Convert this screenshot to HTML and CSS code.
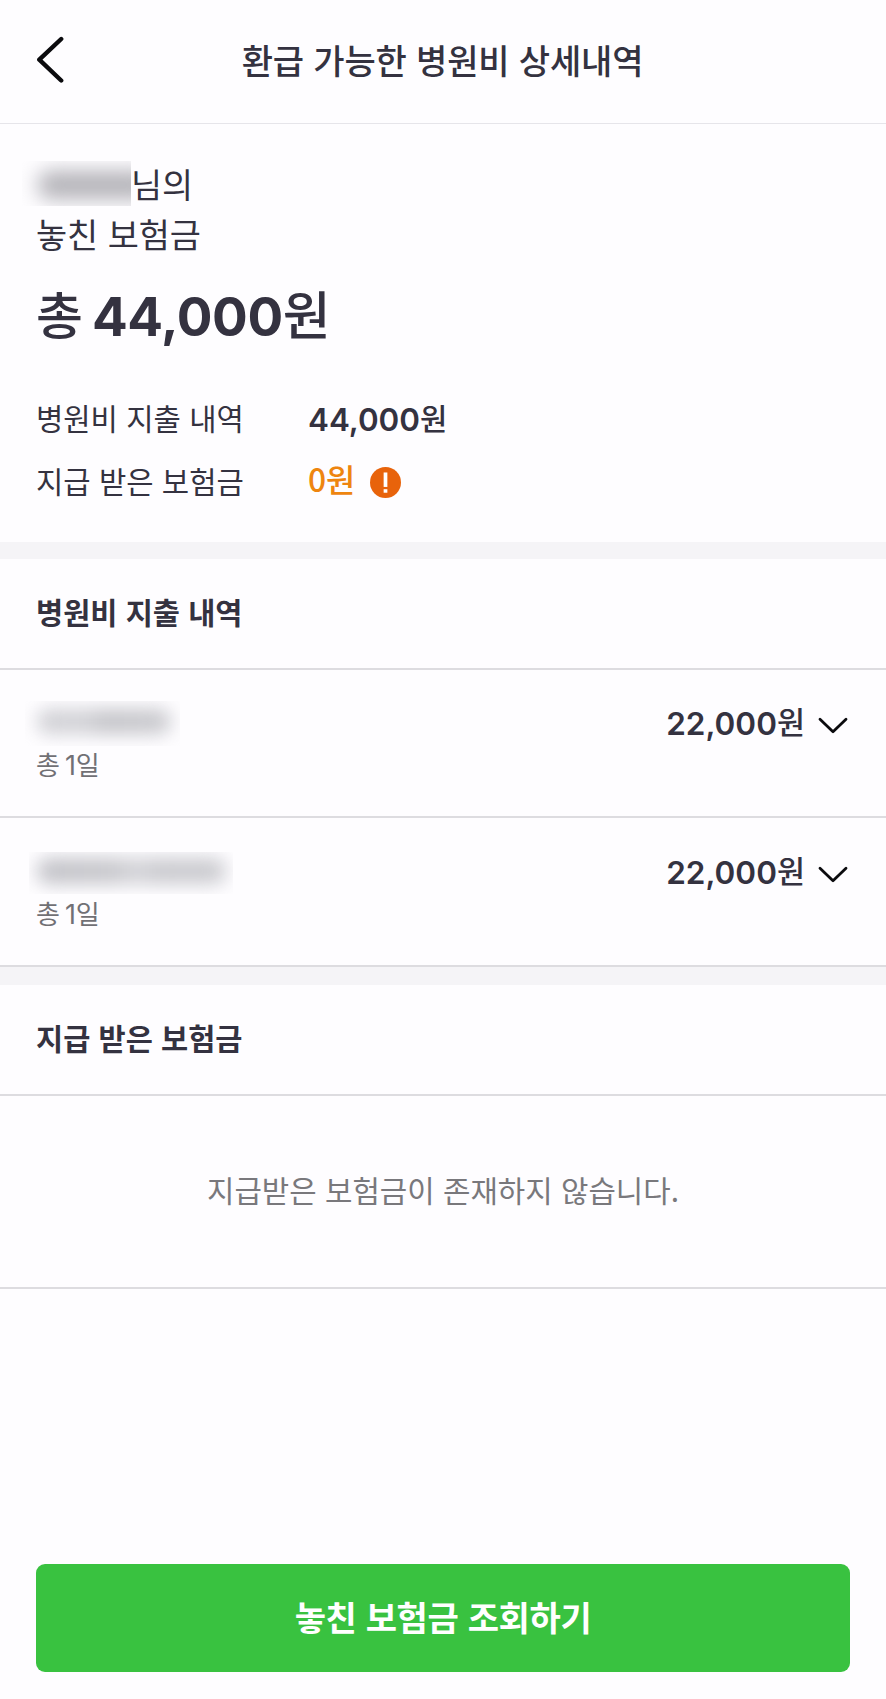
FILE: index.html
```html
<!DOCTYPE html>
<html lang="ko">
<head>
<meta charset="utf-8">
<title>환급 가능한 병원비 상세내역</title>
<link rel="stylesheet" href="styles.css">
</head>
<body>
<div class="app">
  <header class="header">
    <svg class="back" width="28" height="48" viewBox="0 0 28 48"><path d="M25.2 3 3.3 23.7 25.2 44.5" fill="none" stroke="#0b0b0e" stroke-width="4.4" stroke-linecap="round" stroke-linejoin="round"/></svg>
    <h1 class="title">환급 가능한 병원비 상세내역</h1>
  </header>

  <section class="summary">
    <div class="line"><span class="mask mask-user"><i></i></span><span>님의</span></div>
    <div class="line">놓친 보험금</div>
    <div class="total"><span class="total-label">총</span><span class="num">44,000</span><span class="total-unit">원</span></div>
    <div class="row"><span class="label">병원비 지출 내역</span><span class="value"><span class="num">44,000</span>원</span></div>
    <div class="row"><span class="label">지급 받은 보험금</span><span class="value orange">0원</span>
      <svg class="alert" width="31" height="31" viewBox="0 0 30 30"><circle cx="15" cy="15" r="15" fill="#e8630b"/><rect x="13.2" y="5.3" width="3.6" height="14" fill="#fff"/><rect x="13.2" y="21.5" width="3.6" height="3.4" fill="#fff"/></svg>
    </div>
  </section>

  <section class="section spend">
    <h2 class="heading">병원비 지출 내역</h2>
    <div class="item">
      <div class="place"><span class="mask mask-a"><i></i></span><p class="days">총 <span class="num">1</span>일</p></div>
      <div class="price"><span class="num">22,000</span>원</div>
      <svg class="chevron" width="30" height="17" viewBox="0 0 30 17"><path d="M2 2.2 15 14.7 28 2.2" fill="none" stroke="#0b0b0e" stroke-width="2.8" stroke-linecap="round" stroke-linejoin="round"/></svg>
    </div>
    <div class="item">
      <div class="place"><span class="mask mask-b"><i></i></span><p class="days">총 <span class="num">1</span>일</p></div>
      <div class="price"><span class="num">22,000</span>원</div>
      <svg class="chevron" width="30" height="17" viewBox="0 0 30 17"><path d="M2 2.2 15 14.7 28 2.2" fill="none" stroke="#0b0b0e" stroke-width="2.8" stroke-linecap="round" stroke-linejoin="round"/></svg>
    </div>
  </section>

  <section class="section received">
    <h2 class="heading">지급 받은 보험금</h2>
    <p class="empty">지급받은 보험금이 존재하지 않습니다.</p>
  </section>

  <footer class="footer"><button class="cta">놓친 보험금 조회하기</button></footer>
</div>
</body>
</html>
```
FILE: styles.css
```css
* { box-sizing: border-box; margin: 0; padding: 0; }
body {
  background: #fefdff;
  color: #343240;
  font-family: "Noto Sans CJK KR", sans-serif;
}
.app { display: flex; flex-direction: column; height: 1699px; overflow: hidden; }
.num { font-family: Inter, sans-serif; }

.header {
  display: grid;
  grid-template-columns: 28px 1fr 28px;
  height: 124px;
  padding: 0 37px 4px 36px;
  align-items: center;
  border-bottom: 1px solid #e6e5ea;
}
.title { padding-top: 1px; font-size: 34px; font-weight: 500; line-height: 50px; letter-spacing: -0.15px; text-align: center; white-space: nowrap; }

.summary { height: 418px; padding: 35px 37px 0 36px; }
.line { display: flex; height: 50px; font-size: 33.8px; line-height: 50px; }
.total { display: flex; height: 60px; margin: 24px 0 43px; font-size: 51px; font-weight: 500; line-height: 60px; }
.total .num { margin-left: 9px; padding-top: 4px; font-size: 53px; font-weight: 700; letter-spacing: -0.4px; }
.total-unit { font-size: 52px; }
.row { display: flex; height: 63px; font-size: 29.7px; line-height: 63px; }
.label { width: 272px; }
.value { font-weight: 500; }
.value .num { position: relative; top: 1px; font-size: 31.4px; font-weight: 600; }
.orange { color: #ee850f; font-size: 31.8px; line-height: 58px; }
.alert { margin: 18px 0 0 15px; }

.mask { display: block; overflow: hidden; flex: none; }
.mask i { display: block; border-radius: 12px; }
.mask-user { width: 109px; height: 45px; margin: 2px 0 0 -14px; }
.mask-user i { width: 115px; height: 28px; margin: 10px 0 0 16px; background: #b3b2b8; filter: blur(10px); }
.mask-a { width: 155px; height: 45px; margin-left: -11px; }
.mask-a i { width: 134px; height: 25px; margin: 8px 0 0 12px; background: linear-gradient(90deg, #cfcfd4, #d2d2d7 35%, #c4c4c9 50%, #c9c9ce); filter: blur(9px); }
.mask-b { width: 204px; height: 42px; margin: 3px 0 1px -7px; }
.mask-b i { width: 189px; height: 26px; margin: 6px 0 0 8px; background: linear-gradient(90deg, #c2c2c8, #c6c6cb 40%, #d3d3d8 52%, #c9c9ce 65%, #cbcbd0); filter: blur(9px); }

.section { border-top: 17px solid #f5f4f7; }
.heading {
  height: 111px;
  padding: 22px 36px 0;
  border-bottom: 2px solid #dddce0;
  font-size: 29.5px;
  font-weight: 700;
  line-height: 60px;
}
.item { display: flex; height: 148px; padding: 31px 36px 0; border-bottom: 2px solid #dddce0; }
.item + .item { height: 149px; padding-top: 32px; }
.place { flex: 1; }
.days { height: 36px; color: #717075; font-size: 26px; line-height: 36px; letter-spacing: -0.3px; }
.days .num { margin-left: -1.5px; font-size: 27px; }
.item + .item .mask { margin-top: 2px; }
.price { font-size: 30.5px; font-weight: 500; line-height: 41px; }
.price .num { position: relative; top: 1px; font-size: 31.5px; font-weight: 600; }
.chevron { margin: 16px 2px 0 13px; }
.received { border-top-width: 18px; }
.empty { height: 193px; border-bottom: 2px solid #dddce0; color: #79787c; font-size: 29.8px; line-height: 187px; text-align: center; }

.footer { margin-top: auto; padding: 0 36px 27px; }
.cta {
  display: block;
  width: 100%;
  height: 108px;
  padding-bottom: 3px;
  border: 0;
  border-radius: 9px;
  background: #39c240;
  color: #fff;
  font: 700 34px/60px "Noto Sans CJK KR", sans-serif;
  letter-spacing: -0.35px;
}
```
